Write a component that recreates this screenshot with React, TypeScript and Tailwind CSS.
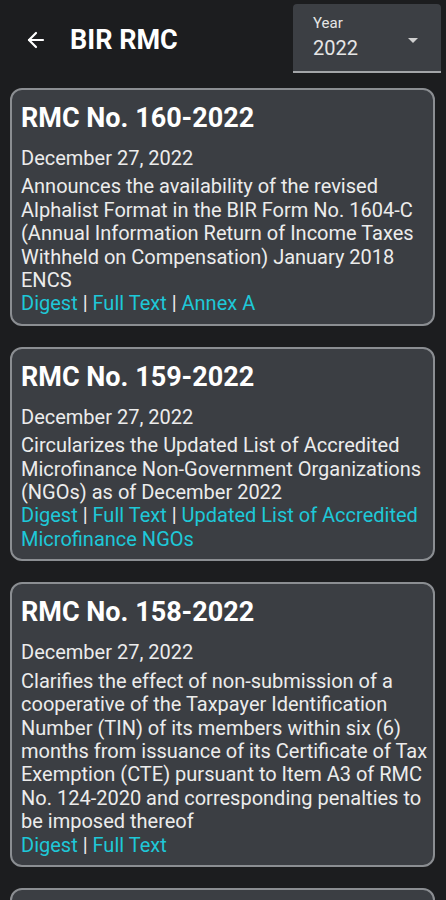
import React from 'react';
import { ArrowLeft } from 'lucide-react';

interface Rmc {
  no: string;
  date: string;
  text: string;
  links: string[];
}

const items: Rmc[] = [
  {
    no: 'RMC No. 160-2022',
    date: 'December 27, 2022',
    text: 'Announces the availability of the revised Alphalist Format in the BIR Form No. 1604-C (Annual Information Return of Income Taxes Withheld on Compensation) January 2018 ENCS',
    links: ['Digest', 'Full Text', 'Annex A'],
  },
  {
    no: 'RMC No. 159-2022',
    date: 'December 27, 2022',
    text: 'Circularizes the Updated List of Accredited Microfinance Non-Government Organizations (NGOs) as of December 2022',
    links: ['Digest', 'Full Text', 'Updated List of Accredited Microfinance NGOs'],
  },
  {
    no: 'RMC No. 158-2022',
    date: 'December 27, 2022',
    text: 'Clarifies the effect of non-submission of a cooperative of the Taxpayer Identification Number (TIN) of its members within six (6) months from issuance of its Certificate of Tax Exemption (CTE) pursuant to Item A3 of RMC No. 124-2020 and corresponding penalties to be imposed thereof',
    links: ['Digest', 'Full Text'],
  },
  {
    no: 'RMC No. 157-2022',
    date: 'December 22, 2022',
    text: '',
    links: ['Digest', 'Full Text'],
  },
];

const RmcCard: React.FC<{ item: Rmc }> = ({ item }) => (
  <div className="rounded-[12px] border-2 border-[#8b8e92] bg-[#3b3e43] pl-[9px] pr-[4px] pt-[11px] pb-[8px]">
    <div className="text-[27px] leading-[34px] font-bold text-white">{item.no}</div>
    <div className="mt-[12px] mb-[5px] text-[20px] leading-[23.4px] text-[#ececec]">{item.date}</div>
    <div className="text-[20px] leading-[23.4px] text-[#ececec]">{item.text}</div>
    <div className="text-[20px] leading-[23.4px] text-[#ececec]">
      {item.links.map((l, i) => (
        <React.Fragment key={i}>
          {i > 0 && ' | '}
          <span className="text-[#1ec8d8]">{l}</span>
        </React.Fragment>
      ))}
    </div>
  </div>
);

export default function App() {
  return (
    <div className="h-screen overflow-hidden bg-[#1c1d1f] font-['Roboto',sans-serif]">
      <div className="flex h-[78px] items-start">
        <div className="flex h-[80px] flex-1 items-center">
          <ArrowLeft size={24} strokeWidth={2.2} className="ml-[24px] text-white" />
          <span className="ml-[22px] text-[27px] font-bold text-white">BIR RMC</span>
        </div>
        <div className="relative mt-[4px] mr-[5px] h-[69px] w-[148px] rounded-t-[4px] border-b-2 border-[#a3a5a8] bg-[#3c3f44] pl-[20px] pt-[10px]">
          <div className="text-[15px] leading-[18px] text-[#e6e6e6]">Year</div>
          <div className="mt-[4px] text-[20px] leading-[24px] text-[#e6e6e6]">2022</div>
          <div className="absolute right-[23px] top-[34px] h-0 w-0 border-x-[5px] border-t-[5px] border-x-transparent border-t-[#d0d0d0]" />
        </div>
      </div>
      <div className="mt-[10px] flex flex-col gap-[21px] pl-[10px] pr-[11px]">
        {items.map((it, i) => (
          <RmcCard key={i} item={it} />
        ))}
      </div>
    </div>
  );
}
